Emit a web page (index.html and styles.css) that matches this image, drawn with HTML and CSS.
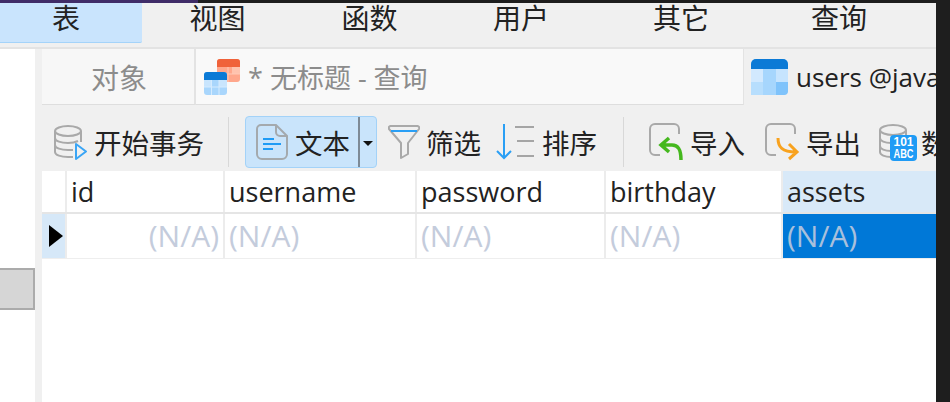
FILE: index.html
```html
<!DOCTYPE html>
<html lang="zh-CN">
<head>
    <meta charset="UTF-8">
    <meta name="viewport" content="width=device-width, initial-scale=1.0">
    <title>users @java</title>
    <link rel="stylesheet" href="styles.css">
</head>
<body>
    <div class="top-edge"><div class="top-edge-tint"></div></div>
    <div class="window">
        <div class="menu">
            <div class="menu-item menu-table active">表</div>
            <div class="menu-item menu-view">视图</div>
            <div class="menu-item menu-func">函数</div>
            <div class="menu-item menu-user">用户</div>
            <div class="menu-item menu-other">其它</div>
            <div class="menu-item menu-query">查询</div>
        </div>
        <div class="main">
            <div class="sidebar"><div class="sidebar-thumb"></div></div>
            <div class="workspace">
                <div class="tabs">
                    <div class="tab tab-objects">对象</div>
                    <div class="tab tab-query">
                        <svg class="query-icon" viewBox="0 0 37 37">
                            <rect x="13" y="0" width="23" height="23" rx="3" fill="#ffa78c"/>
                            <path d="M13 8V3a3 3 0 0 1 3-3h17a3 3 0 0 1 3 3v5z" fill="#f0623a"/>
                            <path d="M28 8h8v7h-8z" fill="#ffc3ae"/>
                            <path d="M24 8v15M13 15h23" stroke="#ffc9b6" stroke-width="1"/>
                            <rect x="0" y="13" width="23" height="23" rx="3" fill="#a9d6fc"/>
                            <path d="M0 21v-5a3 3 0 0 1 3-3h17a3 3 0 0 1 3 3v5z" fill="#0b7ad6"/>
                            <path d="M0 21h7v7H0zM15 21h8v7h-8z" fill="#c9e5fd"/>
                            <path d="M7.500 21v15M15 21v15M0 28h23" stroke="#d5ebfe" stroke-width="1"/>
                        </svg>
                        <span>* 无标题 - 查询</span>
                    </div>
                    <div class="tab tab-users">
                        <svg class="users-icon" viewBox="0 0 37 37">
                            <rect x="0" y="0" width="37" height="36" rx="5" fill="#a6d6fd"/>
                            <path d="M0 10V5a5 5 0 0 1 5-5h27a5 5 0 0 1 5 5v5z" fill="#0b7ad6"/>
                            <path d="M0 10h12v13H0z" fill="#d2e9fe"/>
                            <path d="M25 10h12v13H25z" fill="#c6e4fe"/>
                            <path d="M0 36V23h12v13z" fill="#b7defd"/>
                            <path d="M25 23h12v9a4 4 0 0 1-4 4h-8z" fill="#7fc3fb"/>
                        </svg>
                        <span>users @java</span>
                    </div>
                </div>
                <div class="toolbar">
                    <div class="tool tool-begin">
                        <svg class="icon-begin" viewBox="0 0 34 36" fill="none" stroke="#a9a9a9" stroke-width="2">
                            <ellipse cx="14" cy="7" rx="13" ry="5"/>
                            <path d="M1 7v21c0 3 6 5 13 5h5M27 7v11M1 14c0 3 6 5 13 5 4 0 8-1 10-2M1 21c0 3 6 5 13 5h5"/>
                            <path d="M22 20l10 7.500-10 7.500z" stroke="#3aa5f5" stroke-linejoin="round"/>
                        </svg>
                        <span>开始事务</span>
                    </div>
                    <div class="tool-sep sep-first"></div>
                    <div class="text-btn">
                        <svg class="icon-doc" viewBox="0 0 32 36" fill="none">
                            <path d="M5 1h15l11 11v18a5 5 0 0 1-5 5H6a5 5 0 0 1-5-5V5a4 4 0 0 1 4-4z" stroke="#a4a9ad" stroke-width="2"/>
                            <path d="M20 1v7a4 4 0 0 0 4 4h7" stroke="#a4a9ad" stroke-width="2"/>
                            <path d="M7 15h11M7 20h18M7 25h10" stroke="#1f9bf5" stroke-width="2"/>
                        </svg>
                        <span class="text-btn-label">文本</span>
                        <div class="text-btn-split"></div>
                        <div class="text-btn-arrow"></div>
                    </div>
                    <div class="tool tool-filter">
                        <svg class="icon-funnel" viewBox="0 0 32 34" fill="none">
                            <path d="M3 1h26a2 2 0 0 1 2 3L20 18v11l-7 4V18L1 4a2 2 0 0 1 2-3z" stroke="#a9a9a9" stroke-width="2" stroke-linejoin="round"/>
                            <path d="M3 6h26" stroke="#2a9ff5" stroke-width="2"/>
                        </svg>
                        <span>筛选</span>
                    </div>
                    <div class="tool tool-sort">
                        <svg class="icon-sort" viewBox="0 0 38 36" fill="none">
                            <path d="M8 0v34M1 27l7 7 7-7" stroke="#2a9ff5" stroke-width="2"/>
                            <path d="M19 3h19M21 17h17M21 32h17" stroke="#a5a5a5" stroke-width="2"/>
                        </svg>
                        <span>排序</span>
                    </div>
                    <div class="tool-sep sep-second"></div>
                    <div class="tool tool-import">
                        <svg class="icon-transfer" viewBox="0 0 36 38" fill="none">
                            <path d="M25 1H6a5 5 0 0 0-5 5v21a5 5 0 0 0 5 5h5M25 1a5 5 0 0 1 5 5v5" stroke="#a9a9a9" stroke-width="2"/>
                            <path d="M20 15l-8 7 8 7M12 22h11c6 0 9 4 9 15" stroke="#45b81e" stroke-width="3.500"/>
                        </svg>
                        <span>导入</span>
                    </div>
                    <div class="tool tool-export">
                        <svg class="icon-transfer" viewBox="0 0 36 38" fill="none">
                            <path d="M25 1H6a5 5 0 0 0-5 5v21a5 5 0 0 0 5 5h5M25 1a5 5 0 0 1 5 5v5" stroke="#a9a9a9" stroke-width="2"/>
                            <path d="M13 15c0 9 4 14 18 14M24 21l8 8-8 7" stroke="#f8a21e" stroke-width="3"/>
                        </svg>
                        <span>导出</span>
                    </div>
                    <div class="tool tool-data">
                        <svg class="icon-data" viewBox="0 0 38 38">
                            <g fill="none" stroke="#a9a9a9" stroke-width="2">
                                <ellipse cx="14" cy="7" rx="13" ry="5"/>
                                <path d="M1 7v22c0 3 5 5 11 5M27 7v6M1 15c0 3 5 5 11 5M1 23c0 3 5 5 11 5"/>
                            </g>
                            <rect x="11" y="12" width="27" height="26" rx="4" fill="#1f9bf5"/>
                            <text x="24.500" y="23" class="data-num" textLength="20" lengthAdjust="spacingAndGlyphs">101</text>
                            <text x="24.500" y="35" class="data-num" textLength="20" lengthAdjust="spacingAndGlyphs">ABC</text>
                        </svg>
                        <span>数</span>
                    </div>
                </div>
                <div class="grid">
                    <div class="row head-row">
                        <div class="cell marker-cell"></div>
                        <div class="cell col-id">id</div>
                        <div class="cell col-username">username</div>
                        <div class="cell col-password">password</div>
                        <div class="cell col-birthday">birthday</div>
                        <div class="cell col-assets head-active">assets</div>
                    </div>
                    <div class="row data-row">
                        <div class="cell marker-cell marker-active"><div class="marker-arrow"></div></div>
                        <div class="cell col-id null-cell num-cell">(N/A)</div>
                        <div class="cell col-username null-cell">(N/A)</div>
                        <div class="cell col-password null-cell">(N/A)</div>
                        <div class="cell col-birthday null-cell">(N/A)</div>
                        <div class="cell col-assets null-cell cell-active">(N/A)</div>
                    </div>
                </div>
            </div>
        </div>
    </div>
</body>
</html>
```

FILE: styles.css
```css
* {
    margin: 0;
    padding: 0;
    box-sizing: border-box;
}

body {
    width: 950px;
    height: 402px;
    overflow: hidden;
    background-color: #1e1e1e;
    font-family: "Open Sans", "Noto Sans CJK SC", sans-serif;
    color: #222;
}

.top-edge {
    height: 3px;
}

.top-edge-tint {
    width: 198px;
    height: 3px;
    background-color: #3f2c68;
}

.window {
    width: 936px;
    height: 399px;
    background-color: #f0f0f0;
    display: flex;
    flex-direction: column;
    overflow: hidden;
}

/* menu row */
.menu {
    height: 46px;
    display: flex;
    flex-shrink: 0;
    border-bottom: 2px solid #e3e3e3;
    margin-left: -10px;
}

.menu-item {
    height: 40px;
    font-size: 28px;
    line-height: 29px;
    text-align: center;
    font-family: "Noto Sans CJK SC", sans-serif;
}

.menu-item.active {
    background-color: #c9e4fd;
    border-bottom: 1px solid #a4d3f9;
    border-radius: 0 0 2px 0;
}

.menu-table { width: 152px; }
.menu-view { width: 151px; }
.menu-func { width: 153px; }
.menu-user { width: 150px; }
.menu-other { width: 170px; }
.menu-query { width: 146px; }

.main {
    flex: 1;
    display: flex;
    min-height: 0;
}

.sidebar {
    width: 35px;
    background-color: #fff;
    flex-shrink: 0;
}

.sidebar-thumb {
    margin-top: 219px;
    height: 42px;
    background-color: #d6d6d6;
    border: 2px solid #ababab;
    border-left: none;
}

.workspace {
    flex: 1;
    margin-left: 7px;
    display: flex;
    flex-direction: column;
    min-width: 0;
}

/* document tabs */
.tabs {
    height: 56px;
    display: flex;
    flex-shrink: 0;
}

.tab {
    display: flex;
    align-items: center;
    font-size: 26px;
    white-space: nowrap;
    font-family: "Open Sans", "Noto Sans CJK SC", sans-serif;
}

.tab-objects {
    width: 154px;
    padding-left: 49px;
    font-size: 28px;
    background-color: #f7f7f7;
    border-right: 2px solid #e3e3e3;
    border-bottom: 1px solid #dedede;
    color: #8c8c8c;
}

.tab-query {
    width: 548px;
    padding-left: 8px;
    font-size: 27px;
    background-color: #f9f9f9;
    border-right: 1px solid #e3e3e3;
    border-bottom: 1px solid #dedede;
    color: #8c8c8c;
}

.query-icon {
    width: 37px;
    height: 37px;
    margin-right: 7px;
    margin-top: 2px;
}

.tab-users {
    padding-left: 7px;
    flex: 1;
    min-width: 0;
    overflow: hidden;
}

.users-icon {
    width: 37px;
    height: 37px;
    margin-right: 8px;
    flex-shrink: 0;
}

/* toolbar */
.toolbar {
    height: 66px;
    display: flex;
    align-items: center;
    flex-shrink: 0;
    padding-left: 12px;
    padding-top: 8px;
    overflow: hidden;
    font-size: 27.5px;
    font-family: "Noto Sans CJK SC", sans-serif;
    white-space: nowrap;
}

.tool {
    display: flex;
    align-items: center;
    gap: 6px;
    flex-shrink: 0;
}

.icon-begin { width: 34px; height: 36px; }
.icon-doc { width: 32px; height: 36px; }
.icon-funnel { width: 32px; height: 34px; }
.icon-sort { width: 38px; height: 36px; }
.icon-transfer { width: 36px; height: 38px; }
.icon-data { width: 38px; height: 38px; }

.tool-sep {
    width: 1px;
    height: 50px;
    background-color: #d8d8d8;
    flex-shrink: 0;
}

.sep-first { margin-left: 24px; }
.sep-second { margin-left: 26px; }

.text-btn {
    width: 132px;
    height: 52px;
    margin-left: 16px;
    padding-left: 10px;
    display: flex;
    align-items: center;
    background-color: #c9e4fb;
    border: 1px solid #a3d2f8;
    border-radius: 4px;
    flex-shrink: 0;
}

.text-btn-label {
    margin-left: 7px;
}

.text-btn-split {
    width: 2px;
    height: 50px;
    margin-left: 8px;
    background-color: #7d8a96;
}

.text-btn-arrow {
    width: 0;
    height: 0;
    margin-left: 3px;
    margin-top: 3px;
    border-left: 5px solid transparent;
    border-right: 5px solid transparent;
    border-top: 5px solid #111;
}

.tool-filter { margin-left: 11px; }
.tool-sort { margin-left: 15px; gap: 8px; }
.tool-import { margin-left: 25px; gap: 5px; }
.tool-export { margin-left: 20px; gap: 5px; }
.tool-data { margin-left: 18px; gap: 4px; }

.data-num {
    font-family: "Liberation Sans", sans-serif;
    font-size: 12px;
    font-weight: bold;
    fill: #fff;
    text-anchor: middle;
}

/* table */
.grid {
    flex: 1;
    background-color: #fff;
    font-size: 27px;
    font-family: "Open Sans", sans-serif;
}

.row {
    display: flex;
    white-space: nowrap;
}

.head-row {
    height: 43px;
    border-bottom: 2px solid #e5e5e5;
    line-height: 41px;
}

.data-row {
    height: 45px;
    border-bottom: 1px solid #eeeeee;
    line-height: 44px;
}

.cell {
    padding-left: 4px;
    border-right: 2px solid #ececec;
    overflow: hidden;
    flex-shrink: 0;
}

.marker-cell {
    width: 25px;
    padding-left: 0;
    display: flex;
    align-items: center;
}

.marker-active {
    background-color: #d6e8f8;
}

.marker-arrow {
    width: 0;
    height: 0;
    margin-left: 7px;
    border-left: 14px solid #000;
    border-top: 11px solid transparent;
    border-bottom: 11px solid transparent;
}

.col-id { width: 158px; }
.col-username { width: 192px; }
.col-password { width: 189px; }
.col-birthday { width: 177px; }
.col-assets { flex: 1; border-right: none; }

.head-active {
    background-color: #d8e9f8;
}

.null-cell {
    font-size: 30px;
    color: #c4ccdc;
}

.num-cell {
    text-align: right;
    padding-right: 4px;
}

.cell-active {
    background-color: #0078d7;
    color: #a9c0dc;
}
```
